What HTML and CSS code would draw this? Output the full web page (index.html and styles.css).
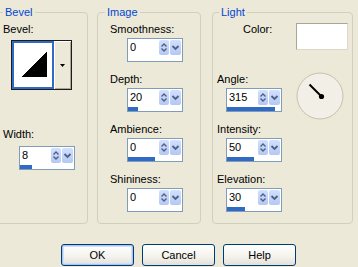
FILE: index.html
```html
<!DOCTYPE html>
<html lang="en">
<head>
    <meta charset="UTF-8">
    <title>Bevel</title>
    <link rel="stylesheet" href="styles.css">
</head>
<body>
    <div class="dialog">
        <div class="groups">
            <fieldset class="group group-bevel">
                <legend>Bevel</legend>
                <div class="label first">Bevel:</div>
                <div class="bevel-picker">
                    <div class="bevel-preview">
                        <svg width="38" height="44" shape-rendering="crispEdges"><polygon points="7,34 33,34 33,9" fill="#000"/></svg>
                    </div>
                    <div class="bevel-drop">
                        <svg width="5" height="3"><polygon points="0,0 5,0 2.5,3" fill="#000"/></svg>
                    </div>
                </div>
                <div class="label width-label">Width:</div>
                <div class="spin width-spin">
                    <div class="spin-row">
                        <span class="spin-value">8</span>
                        <span class="spin-arrows"><svg width="10" height="15"><path d="M2.5 6.5L5 4L7.5 6.5M2.5 8.5L5 11L7.5 8.5" fill="none" stroke="#4d6185" stroke-width="1.4"/></svg></span>
                        <span class="spin-drop"><svg width="11" height="15"><path d="M2.5 6L5.5 9L8.5 6" fill="none" stroke="#4d6185" stroke-width="1.8"/></svg></span>
                    </div>
                    <div class="spin-bar"><div class="spin-fill" style="width: 12px"></div></div>
                </div>
            </fieldset>

            <fieldset class="group group-image">
                <legend>Image</legend>
                <div class="field first">
                    <div class="label">Smoothness:</div>
                    <div class="spin">
                        <div class="spin-row">
                            <span class="spin-value">0</span>
                            <span class="spin-arrows"><svg width="10" height="15"><path d="M2.5 6.5L5 4L7.5 6.5M2.5 8.5L5 11L7.5 8.5" fill="none" stroke="#4d6185" stroke-width="1.4"/></svg></span>
                            <span class="spin-drop"><svg width="11" height="15"><path d="M2.5 6L5.5 9L8.5 6" fill="none" stroke="#4d6185" stroke-width="1.8"/></svg></span>
                        </div>
                        <div class="spin-bar"><div class="spin-fill" style="width: 0px"></div></div>
                    </div>
                </div>
                <div class="field">
                    <div class="label">Depth:</div>
                    <div class="spin">
                        <div class="spin-row">
                            <span class="spin-value">20</span>
                            <span class="spin-arrows"><svg width="10" height="15"><path d="M2.5 6.5L5 4L7.5 6.5M2.5 8.5L5 11L7.5 8.5" fill="none" stroke="#4d6185" stroke-width="1.4"/></svg></span>
                            <span class="spin-drop"><svg width="11" height="15"><path d="M2.5 6L5.5 9L8.5 6" fill="none" stroke="#4d6185" stroke-width="1.8"/></svg></span>
                        </div>
                        <div class="spin-bar"><div class="spin-fill" style="width: 10px"></div></div>
                    </div>
                </div>
                <div class="field">
                    <div class="label">Ambience:</div>
                    <div class="spin">
                        <div class="spin-row">
                            <span class="spin-value">0</span>
                            <span class="spin-arrows"><svg width="10" height="15"><path d="M2.5 6.5L5 4L7.5 6.5M2.5 8.5L5 11L7.5 8.5" fill="none" stroke="#4d6185" stroke-width="1.4"/></svg></span>
                            <span class="spin-drop"><svg width="11" height="15"><path d="M2.5 6L5.5 9L8.5 6" fill="none" stroke="#4d6185" stroke-width="1.8"/></svg></span>
                        </div>
                        <div class="spin-bar"><div class="spin-fill" style="width: 27px"></div></div>
                    </div>
                </div>
                <div class="field">
                    <div class="label">Shininess:</div>
                    <div class="spin">
                        <div class="spin-row">
                            <span class="spin-value">0</span>
                            <span class="spin-arrows"><svg width="10" height="15"><path d="M2.5 6.5L5 4L7.5 6.5M2.5 8.5L5 11L7.5 8.5" fill="none" stroke="#4d6185" stroke-width="1.4"/></svg></span>
                            <span class="spin-drop"><svg width="11" height="15"><path d="M2.5 6L5.5 9L8.5 6" fill="none" stroke="#4d6185" stroke-width="1.8"/></svg></span>
                        </div>
                        <div class="spin-bar"><div class="spin-fill" style="width: 0px"></div></div>
                    </div>
                </div>
            </fieldset>

            <fieldset class="group group-light">
                <legend>Light</legend>
                <div class="color-row">
                    <div class="label color-label">Color:</div>
                    <div class="swatch"></div>
                </div>
                <div class="angle-row">
                    <div class="field">
                        <div class="label">Angle:</div>
                        <div class="spin">
                            <div class="spin-row">
                                <span class="spin-value">315</span>
                                <span class="spin-arrows"><svg width="10" height="15"><path d="M2.5 6.5L5 4L7.5 6.5M2.5 8.5L5 11L7.5 8.5" fill="none" stroke="#4d6185" stroke-width="1.4"/></svg></span>
                                <span class="spin-drop"><svg width="11" height="15"><path d="M2.5 6L5.5 9L8.5 6" fill="none" stroke="#4d6185" stroke-width="1.8"/></svg></span>
                            </div>
                            <div class="spin-bar"><div class="spin-fill" style="width: 48px"></div></div>
                        </div>
                    </div>
                    <svg class="dial" width="48" height="48">
                        <circle cx="24" cy="24" r="23" fill="#f1efe6" stroke="#c4c1b0" stroke-width="1"/>
                        <line x1="13.5" y1="12.5" x2="25.5" y2="24.5" stroke="#000" stroke-width="2"/>
                        <circle cx="25.5" cy="24.5" r="2.6" fill="#000"/>
                    </svg>
                </div>
                <div class="field">
                    <div class="label">Intensity:</div>
                    <div class="spin">
                        <div class="spin-row">
                            <span class="spin-value">50</span>
                            <span class="spin-arrows"><svg width="10" height="15"><path d="M2.5 6.5L5 4L7.5 6.5M2.5 8.5L5 11L7.5 8.5" fill="none" stroke="#4d6185" stroke-width="1.4"/></svg></span>
                            <span class="spin-drop"><svg width="11" height="15"><path d="M2.5 6L5.5 9L8.5 6" fill="none" stroke="#4d6185" stroke-width="1.8"/></svg></span>
                        </div>
                        <div class="spin-bar"><div class="spin-fill" style="width: 27px"></div></div>
                    </div>
                </div>
                <div class="field">
                    <div class="label">Elevation:</div>
                    <div class="spin">
                        <div class="spin-row">
                            <span class="spin-value">30</span>
                            <span class="spin-arrows"><svg width="10" height="15"><path d="M2.5 6.5L5 4L7.5 6.5M2.5 8.5L5 11L7.5 8.5" fill="none" stroke="#4d6185" stroke-width="1.4"/></svg></span>
                            <span class="spin-drop"><svg width="11" height="15"><path d="M2.5 6L5.5 9L8.5 6" fill="none" stroke="#4d6185" stroke-width="1.8"/></svg></span>
                        </div>
                        <div class="spin-bar"><div class="spin-fill" style="width: 18px"></div></div>
                    </div>
                </div>
            </fieldset>
        </div>

        <div class="buttons">
            <button class="btn btn-default">OK</button>
            <button class="btn">Cancel</button>
            <button class="btn">Help</button>
        </div>
    </div>
</body>
</html>
```

FILE: styles.css
```css
body {
    margin: 0;
    background-color: #ece9d8;
    font-family: "Liberation Sans", Arial, sans-serif;
    font-size: 11px;
    color: #000;
}

.dialog {
    width: 358px;
    height: 267px;
    padding-top: 6px;
    box-sizing: border-box;
    overflow: hidden;
}

.groups {
    display: flex;
    align-items: flex-start;
}

/* group boxes */
.group {
    box-sizing: border-box;
    height: 218px;
    min-width: 0;
    margin: 0;
    padding: 0;
    border: 1px solid #d0d0bf;
    border-radius: 4px;
}

.group legend {
    padding: 0 2px;
    color: #0046d5;
    line-height: 13px;
}

.group-bevel {
    width: 93px;
    margin-left: -5px;
    padding-left: 7px;
}

.group-image {
    width: 104px;
    margin-left: 9px;
    padding-left: 12px;
}

.group-image legend {
    margin-left: -5px;
}

.group-light {
    width: 141px;
    margin-left: 11px;
    padding: 0 4px;
}

.group-light legend {
    margin-left: 2px;
}

.label {
    line-height: 13px;
    white-space: nowrap;
}

.label.first {
    margin-top: 4px;
}

/* bevel picker */
.bevel-picker {
    display: flex;
    width: 61px;
    height: 50px;
    box-sizing: border-box;
    margin: 4px 0 0 8px;
    border: 1px solid #1c1c1c;
}

.bevel-preview {
    width: 42px;
    box-sizing: border-box;
    border: 2px solid #316ac5;
    background-color: #fff;
}

.bevel-preview svg {
    display: block;
}

.bevel-drop {
    flex: 1;
    display: flex;
    align-items: center;
    justify-content: center;
    background-color: #ece9d8;
    box-shadow: inset 1px 1px 0 #fff, inset -1px -1px 0 #aca899;
}

.width-label {
    margin-top: 38px;
}

.width-spin {
    margin: 5px 0 0 16px;
}

/* fields */
.field {
    margin-bottom: 11px;
}

.field.first {
    margin-top: 4px;
}

.group-image .spin {
    margin: 2px 0 0 17px;
}

.group-light .spin {
    margin: 2px 0 0 9px;
}

/* spin box */
.spin {
    width: 56px;
    height: 24px;
    box-sizing: border-box;
    border: 1px solid #7f9db9;
    background-color: #fff;
    padding: 1px 1px 0 0;
}

.spin-row {
    display: flex;
    height: 15px;
}

.spin-value {
    width: 31px;
    padding-left: 2px;
    box-sizing: border-box;
    line-height: 14px;
}

.spin-arrows,
.spin-drop {
    display: block;
    border-radius: 2px;
    background: linear-gradient(#d3e0fd, #b4c8f4);
}

.spin-arrows {
    width: 10px;
}

.spin-drop {
    width: 11px;
    margin-left: 1px;
}

.spin-arrows svg,
.spin-drop svg {
    display: block;
}

.spin-bar {
    height: 4px;
    margin-top: 2px;
    background-color: #fff;
}

.spin-fill {
    height: 4px;
    background-color: #316ac5;
}

/* light group */
.color-row {
    display: flex;
    align-items: flex-start;
    margin-top: 4px;
    margin-bottom: 23px;
}

.color-label {
    margin-left: 26px;
}

.swatch {
    width: 52px;
    height: 27px;
    box-sizing: border-box;
    margin-left: auto;
    background-color: #fff;
    border: 1px solid #a7a69a;
    border-right-color: #dcd9cb;
    border-bottom-color: #dcd9cb;
}

.angle-row {
    display: flex;
    align-items: flex-start;
}

.dial {
    display: block;
    margin: -1px 0 0 14px;
}

/* buttons */
.buttons {
    display: flex;
    gap: 8px;
    margin-top: 20px;
    padding-left: 61px;
}

.btn {
    width: 73px;
    height: 22px;
    padding: 0;
    font-family: inherit;
    font-size: 11px;
    color: #000;
    border: 1px solid #003c74;
    border-radius: 3px;
    background: linear-gradient(#fff, #f3f2ec 60%, #e3e0d6);
}

.btn-default {
    box-shadow: inset 0 0 0 1px #a9c4f0, inset 0 0 0 2px #cfe0fb;
}
```
